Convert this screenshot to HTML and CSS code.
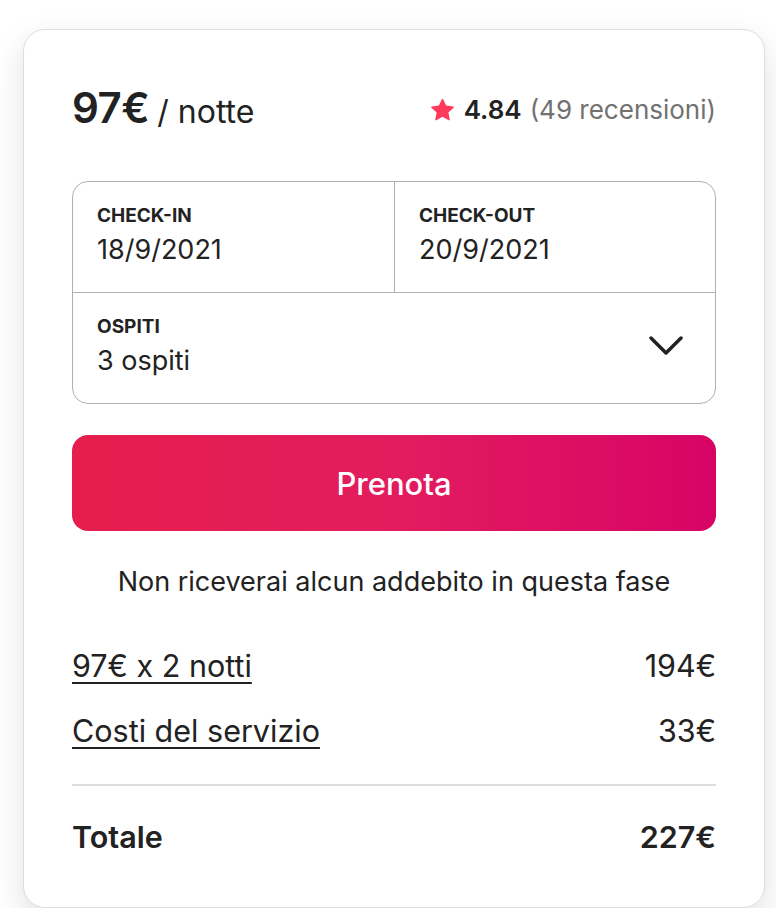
FILE: index.html
```html
<!DOCTYPE html>
<html lang="it">
<head>
<meta charset="utf-8">
<title>Prenota</title>
<link rel="stylesheet" href="styles.css">
</head>
<body>
  <div class="card">
    <div class="header">
      <div class="price"><span class="amount">97€</span><span class="per">/ notte</span></div>
      <div class="rating">
        <svg class="star" viewBox="0 0 32 32" aria-hidden="true"><path d="M15.094 1.579l-4.124 8.885-9.86 1.27a1 1 0 0 0-.542 1.736l7.293 6.565-1.965 9.852a1 1 0 0 0 1.483 1.061L16 25.951l8.625 4.997a1 1 0 0 0 1.482-1.06l-1.965-9.853 7.293-6.565a1 1 0 0 0-.541-1.735l-9.86-1.271-4.127-8.885a1 1 0 0 0-1.814 0z"/></svg>
        <span class="score">4.84</span>
        <span class="reviews">(49 recensioni)</span>
      </div>
    </div>

    <div class="picker">
      <div class="dates">
        <div class="cell">
          <div class="label">CHECK-IN</div>
          <div class="value">18/9/2021</div>
        </div>
        <div class="cell cell-right">
          <div class="label">CHECK-OUT</div>
          <div class="value">20/9/2021</div>
        </div>
      </div>
      <div class="cell guests">
        <div>
          <div class="label">OSPITI</div>
          <div class="value">3 ospiti</div>
        </div>
        <svg class="chevron" viewBox="0 0 34 20" aria-hidden="true"><polyline points="2,2 17,17 32,2"/></svg>
      </div>
    </div>

    <button class="reserve">Prenota</button>

    <p class="note">Non riceverai alcun addebito in questa fase</p>

    <div class="lines">
      <div class="line"><span class="link">97€ x 2 notti</span><span>194€</span></div>
      <div class="line"><span class="link">Costi del servizio</span><span>33€</span></div>
    </div>

    <div class="total"><span>Totale</span><span>227€</span></div>
  </div>
</body>
</html>
```

FILE: styles.css
```css
html, body {
  margin: 0;
  padding: 0;
  background: #ffffff;
}

body {
  font-family: Inter, "Noto Sans", "Liberation Sans", sans-serif;
  color: #222222;
  padding: 29px 11px 0 23px;
}

.card {
  width: 742px;
  box-sizing: border-box;
  border: 1px solid #dddddd;
  border-radius: 22px;
  padding: 48px 48px 50px 48px;
  background: #ffffff;
  box-shadow: 0 12px 32px rgba(0, 0, 0, 0.12);
}

.header {
  display: flex;
  justify-content: space-between;
  align-items: center;
  height: 58px;
}

.price {
  display: flex;
  align-items: baseline;
  gap: 8px;
}

.amount {
  font-size: 42px;
  font-weight: 600;
  letter-spacing: -0.5px;
}

.per {
  font-size: 32px;
}

.rating {
  display: flex;
  align-items: center;
  gap: 8px;
  font-size: 26px;
  margin-top: 4px;
}

.star {
  width: 23px;
  height: 23px;
  fill: #ff385c;
  margin-right: 2px;
}

.score {
  font-weight: 600;
}

.reviews {
  color: #717171;
}

.picker {
  margin-top: 45px;
  border: 1px solid #b0b0b0;
  border-radius: 16px;
}

.dates {
  display: grid;
  grid-template-columns: 1fr 1fr;
  border-bottom: 1px solid #b0b0b0;
}

.cell {
  padding: 22px 24px 26px 24px;
}

.cell-right {
  border-left: 1px solid #b0b0b0;
}

.label {
  font-size: 19px;
  line-height: 24px;
  font-weight: 700;
}

.value {
  font-size: 27px;
  line-height: 32px;
  margin-top: 6px;
}

.guests {
  display: flex;
  justify-content: space-between;
  align-items: center;
  padding-right: 32px;
}

.chevron {
  width: 34px;
  height: 20px;
  fill: none;
  stroke: #222222;
  stroke-width: 3.5;
  stroke-linecap: round;
  stroke-linejoin: round;
}

.reserve {
  display: block;
  width: 100%;
  height: 96px;
  margin-top: 31px;
  border: none;
  border-radius: 16px;
  background: linear-gradient(to right, #e61e4d 0%, #e31c5f 50%, #d70466 100%);
  color: #ffffff;
  font-family: inherit;
  font-size: 31px;
  font-weight: 500;
}

.note {
  margin: 33px 0 0 0;
  text-align: center;
  font-size: 27px;
  line-height: 36px;
}

.lines {
  margin-top: 46px;
  display: flex;
  flex-direction: column;
  gap: 25px;
  padding-bottom: 33px;
  border-bottom: 2px solid #dddddd;
}

.line,
.total {
  display: flex;
  justify-content: space-between;
  font-size: 30.5px;
  line-height: 40px;
}

.link {
  text-decoration: underline;
  text-underline-offset: 5px;
  text-decoration-thickness: 2px;
}

.total {
  padding-top: 31px;
  font-weight: 600;
}
```
